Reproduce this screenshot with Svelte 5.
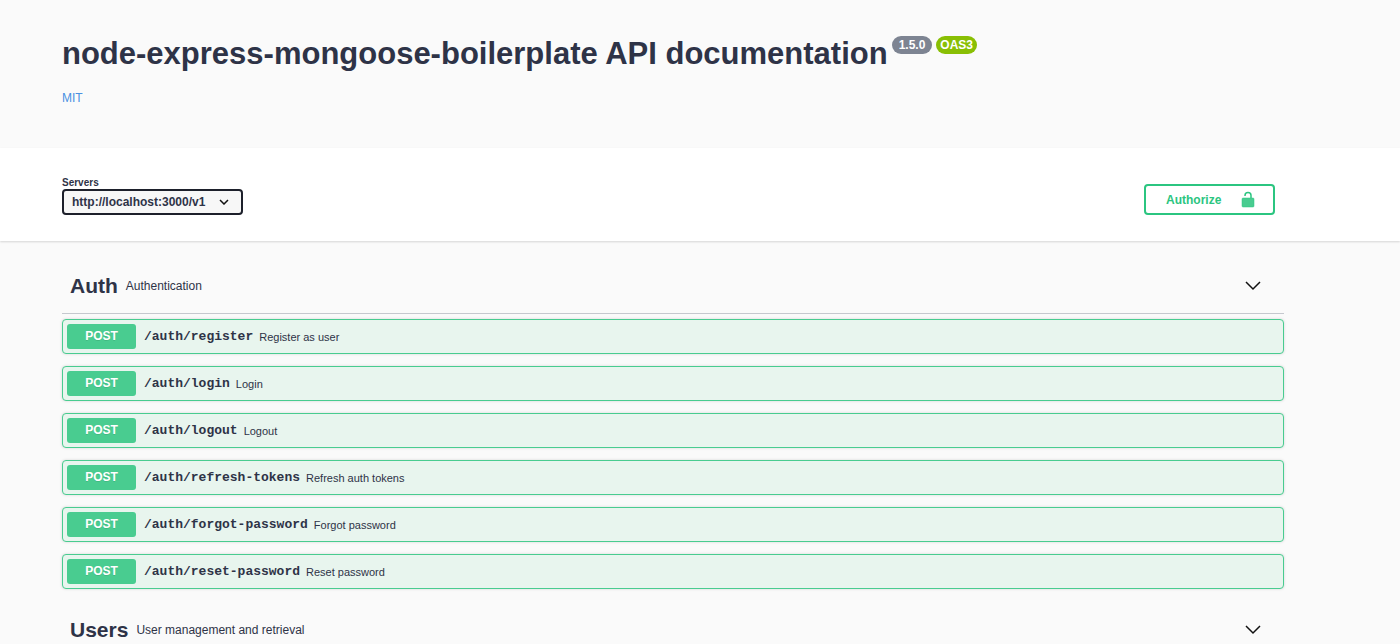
<svelte:options runes={true} />

<script>
	const servers = ['http://localhost:3000/v1'];

	let server = $state(servers[0]);
	let tags = $state([
		{
			name: 'Auth',
			description: 'Authentication',
			open: true,
			operations: [
				{ method: 'post', path: '/auth/register', summary: 'Register as user' },
				{ method: 'post', path: '/auth/login', summary: 'Login' },
				{ method: 'post', path: '/auth/logout', summary: 'Logout' },
				{ method: 'post', path: '/auth/refresh-tokens', summary: 'Refresh auth tokens' },
				{ method: 'post', path: '/auth/forgot-password', summary: 'Forgot password' },
				{ method: 'post', path: '/auth/reset-password', summary: 'Reset password' }
			]
		},
		{
			name: 'Users',
			description: 'User management and retrieval',
			open: true,
			operations: []
		}
	]);

	function toggleTag(tag) {
		tag.open = !tag.open;
	}
</script>

<div class="page">
	<header class="info">
		<div class="wrapper">
			<div class="heading">
				<h1>node-express-mongoose-boilerplate API documentation</h1>
				<span class="badge">1.5.0</span>
				<span class="badge oas">OAS3</span>
			</div>
			<a class="license" href="#license">MIT</a>
		</div>
	</header>

	<section class="schemes">
		<div class="wrapper schemes-row">
			<div class="servers">
				<label for="servers">Servers</label>
				<div class="select">
					<select id="servers" bind:value={server}>
						{#each servers as url}
							<option value={url}>{url}</option>
						{/each}
					</select>
					<svg viewBox="0 0 10 6" width="10" height="6" aria-hidden="true">
						<path d="M1 1l4 4 4-4" />
					</svg>
				</div>
			</div>
			<button class="authorize" type="button">
				<span>Authorize</span>
				<svg viewBox="0 0 18 18" width="18" height="18" aria-hidden="true">
					<path class="shackle" d="M6 5V4.5a3 3 0 0 1 6 0V8" />
					<rect x="3" y="7" width="12" height="9" rx="1" />
				</svg>
			</button>
		</div>
	</section>

	<main class="wrapper">
		{#each tags as tag}
			<section class="tag">
				<div class="tag-header">
					<h2>{tag.name}</h2>
					<p>{tag.description}</p>
					<button
						class="toggle"
						type="button"
						aria-label="Toggle {tag.name}"
						aria-expanded={tag.open}
						onclick={() => toggleTag(tag)}
					>
						<svg viewBox="0 0 16 10" width="16" height="10" aria-hidden="true">
							<path d="M1 1l7 7 7-7" />
						</svg>
					</button>
				</div>
				{#if tag.open}
					<div class="operations">
						{#each tag.operations as op}
							<button class="operation" type="button">
								<span class="method">{op.method}</span>
								<span class="path">{op.path}</span>
								<span class="summary">{op.summary}</span>
							</button>
						{/each}
					</div>
				{/if}
			</section>
		{/each}
	</main>
</div>

<style>
	:global(body) {
		background: #fafafa;
		overflow-y: hidden;
	}
	.page {
		color: #2e3347;
		font-family: 'Liberation Sans', Arial, sans-serif;
	}
	.wrapper {
		box-sizing: border-box;
		padding: 0 116px 0 62px;
	}
	.info {
		padding: 35px 0 42px;
	}
	.heading {
		display: flex;
		align-items: flex-start;
		gap: 4px;
		margin-bottom: 18px;
	}
	h1 {
		margin: 0;
		font-size: 31px;
		line-height: 38px;
	}
	.badge {
		margin-top: 1px;
		padding: 0 7px;
		border-radius: 9px;
		background: #7d8492;
		color: #fff;
		font-size: 12px;
		font-weight: bold;
		line-height: 18px;
	}
	.oas {
		padding: 0 4px;
		background: #89bf04;
	}
	.license {
		display: block;
		width: max-content;
		color: #4990e2;
		font-size: 12px;
		line-height: 15px;
		text-decoration: none;
	}
	.schemes {
		padding: 28px 0 26px;
		background: #fff;
		box-shadow: 0 1px 2px rgba(0, 0, 0, 0.15);
	}
	.schemes-row {
		display: flex;
		align-items: flex-end;
		justify-content: space-between;
		padding-right: 125px;
	}
	.servers label {
		display: block;
		font-size: 10px;
		font-weight: bold;
		line-height: 13px;
	}
	.select {
		display: grid;
		align-items: center;
		width: 181px;
	}
	.select select,
	.select svg {
		grid-area: 1 / 1;
	}
	select {
		appearance: none;
		width: 100%;
		height: 26px;
		padding: 0 8px;
		border: 2px solid #1d202b;
		border-radius: 4px;
		background: #f7f7f7;
		color: inherit;
		font-family: inherit;
		font-size: 12px;
		font-weight: bold;
	}
	.select svg {
		justify-self: end;
		margin-right: 14px;
		pointer-events: none;
	}
	svg path {
		fill: none;
		stroke: #111;
		stroke-width: 1.5;
	}
	.authorize {
		display: flex;
		align-items: center;
		justify-content: space-between;
		width: 131px;
		height: 31px;
		padding: 0 16px 0 20px;
		border: 2px solid #2bc580;
		border-radius: 4px;
		background: transparent;
		color: #2bc580;
		font-family: inherit;
		font-size: 12px;
		font-weight: bold;
	}
	.authorize rect {
		fill: #49cc90;
		stroke: #2bc580;
		stroke-width: 0.5;
	}
	.authorize .shackle {
		stroke: #2bc580;
	}
	main {
		margin-top: 4px;
	}
	.tag {
		padding-top: 13px;
	}
	.tag-header {
		display: flex;
		align-items: center;
		gap: 8px;
		height: 55px;
		padding: 0 23px 0 8px;
		border-bottom: 1px solid #c5c8ce;
	}
	h2 {
		margin: 0;
		font-size: 21px;
		line-height: 26px;
	}
	.tag-header p {
		flex: 1;
		margin: 0;
		font-size: 12px;
	}
	.toggle {
		display: flex;
		padding: 0;
		border: 0;
		background: none;
	}
	.operations {
		display: flex;
		flex-direction: column;
		gap: 12px;
		padding-top: 5px;
	}
	.operation {
		display: flex;
		align-items: center;
		width: 100%;
		padding: 4px;
		border: 1px solid #49cc90;
		border-radius: 4px;
		background: #e8f5ee;
		box-shadow: 0 0 3px rgba(0, 0, 0, 0.15);
		color: inherit;
		font-family: inherit;
		text-align: left;
	}
	.method {
		width: 69px;
		border-radius: 3px;
		background: #49cc90;
		color: #fff;
		font-size: 12px;
		font-weight: bold;
		line-height: 25px;
		text-align: center;
		text-shadow: 0 1px 0 rgba(0, 0, 0, 0.1);
		text-transform: uppercase;
	}
	.path {
		padding: 0 6px 0 8px;
		font-family: 'Liberation Mono', monospace;
		font-size: 13px;
		font-weight: bold;
	}
	.summary {
		font-size: 11px;
	}
</style>
